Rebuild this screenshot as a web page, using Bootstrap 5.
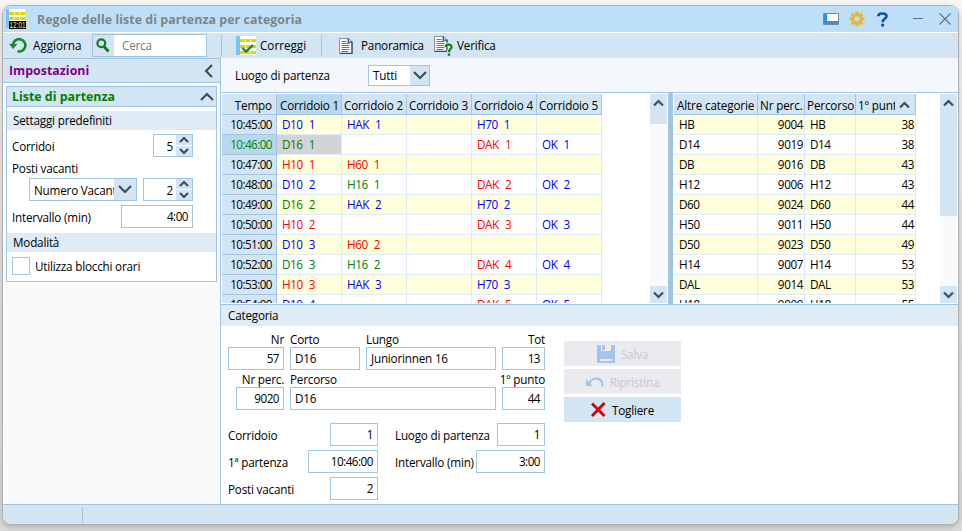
<!DOCTYPE html>
<html lang="it">
<head>
<meta charset="utf-8">
<title>Regole delle liste di partenza per categoria</title>
<link href="https://cdn.jsdelivr.net/npm/bootstrap@5.3.0/dist/css/bootstrap.min.css" rel="stylesheet">
<style>
:root{--line:#a0c5e3;--bar:#d3e5f3;--band:#dfebf5}
*{border-radius:0}
body{width:962px;height:531px;overflow:hidden;background:linear-gradient(#f6f6f6,#e4e4e4 50%,#dadada);font:11.7px/16px "Open Sans","Noto Sans",sans-serif;letter-spacing:-.2px;color:#000;padding:5px 0 0 2px}
.window{width:957px;height:520px;border:1px solid #b0b0b0;border-radius:9px;overflow:hidden;background:#fff;box-shadow:0 2px 6px #0003}
.titlebar{height:27px;background:#bde0f8;border-bottom:1px solid #fff;color:#838383;font-weight:700;font-size:12.4px;padding-left:3px;letter-spacing:.05px}
.titlebar .caption{margin-left:11px;margin-top:1px}
.toolbar{height:25px;background:var(--bar)}
.toolbar>span,.search>span{padding-bottom:2px}
.toolbar svg,.titlebar svg{flex:none;display:block}
.search{width:115px;height:23px;border:1px solid var(--line);background:#fff;margin-left:12px;color:#777;flex:none}
.search .lens{width:21px;height:21px;background:var(--bar);padding:3px}
.vline{width:1px;height:21px;background:var(--line)}
.side{width:218px;background:#f9fafc;border-right:1px solid var(--line)}
.side-head{height:25px;background:var(--bar);border:solid var(--line);border-width:1px 0;color:#800080;font-weight:700;font-size:12.4px;padding:0 7px 0 6px;letter-spacing:0}
.group{margin:3px 3px 0;width:211px;height:196px;border:1px solid var(--line);background:#fff}
.group-head{height:20px;background:var(--bar);border-bottom:1px solid var(--line);color:#008000;font-weight:700;font-size:12.4px;padding:0 2px 0 5px;letter-spacing:0}
.band{background:var(--band);height:19px;padding-left:6px;line-height:19px}
.field{height:23px;border:1px solid var(--line);background:#fff;flex:none;line-height:21px;padding:0 4px;white-space:nowrap;overflow:hidden}
.field.num{text-align:right;letter-spacing:-.5px}
.combo{border:1px solid var(--line);background:#fff;height:23px;flex:none;overflow:hidden}
.combo .val{flex:1;min-width:0;overflow:hidden;white-space:nowrap;padding-left:4px}
.drop{background:var(--bar);flex:none;align-self:stretch}
.spin{width:16px;align-self:stretch;background:#fff}
.spin span{background:var(--bar);height:10px}
.check{width:18px;height:18px;border:1px solid var(--line);background:#fff}
.main-top{height:35px;background:#f4f7fb;border-bottom:1px solid var(--line);padding:7px 0 0 14px}
.tables{height:212px;padding-top:1px;overflow:hidden;border-bottom:1px solid var(--line)}
.pane{overflow:hidden;height:209px;flex:none}
.grid{table-layout:fixed;border-collapse:separate;border-spacing:0}
.grid th{height:21px;background:var(--bar);border:solid var(--line);border-width:0 1px 1px 0;font-weight:400;padding:2px 0 0 2px;white-space:nowrap;overflow:hidden;line-height:16px;letter-spacing:-.15px}
.grid th.on,.grid th:first-child{padding-left:3px}
.grid td{height:20px;border:solid #deebfa;border-width:0 1px 1px 0;padding:0 1px 1px 5px;line-height:16px;white-space:pre;overflow:hidden;letter-spacing:-.4px;word-spacing:.4px}
.grid tr:nth-child(odd) td{background:#ffffdc}
.grid tr td.time,.grid th.time{text-align:right;padding-right:4px;padding-left:0}
.grid tr td.time{background:var(--bar);border-color:var(--line);letter-spacing:-.55px}
.grid tr td.time.on,.grid th.on{background:#bad8ec}
.grid tr td.cell-on{background:#d3d3da}
.grid .b{color:#00f}.grid .r{color:#f00}.grid .g{color:#008000}
.scroll{width:17px;height:209px;background:#f9fafc;flex:none}
.scroll div{background:var(--bar)}
.split{width:5px;height:212px;margin-top:-1px;background:var(--line);flex:none}
.detail-head{height:21px;line-height:21px}
.detail{padding-left:7px}
.cap{height:16px;line-height:16px}
.act{width:117px;height:25px;background:var(--bar)}
.act.off{background:#eaeaef;color:#c9c9cd}
.status{height:20px;background:var(--bar);border-top:1px solid var(--line);padding:2px 0 0 79px}
.w39{width:40px}.w43{width:43px}.w48{width:48px}.w50{width:50px}.w56{width:56px}.w62{width:62px}.w69{width:69px}.w70{width:70px}.w72{width:72px}.w108{width:108px}.w130{width:130px}.w206{width:206px}
.chev{fill:none;stroke:#3b5060;stroke-width:2.2}
</style>
<script src="https://cdn.jsdelivr.net/npm/bootstrap@5.3.0/dist/js/bootstrap.bundle.min.js"></script>
</head>
<body>
<div class="window d-flex flex-column">
  <div class="titlebar d-flex align-items-center">
    <svg width="20" height="20" viewBox="0 0 20 20"><path fill="#7cc3f4" d="M0 0h3v19H0z"/><path fill="#fff" d="M3 0h16v12H3z"/><path fill="#dbd900" d="M3 3h16v3H3zM3 8h16v3H3z"/><path stroke="#fff" d="M8.500 0v12M13.500 0v12" opacity=".7"/><path fill="#000" d="M3 12h17v8H3z"/><text x="3.500" y="19" font-size="8.500" font-family="Liberation Sans" font-weight="400" textLength="16" lengthAdjust="spacingAndGlyphs" fill="#f7ed62">12:01</text></svg>
    <span class="caption">Regole delle liste di partenza per categoria</span>
    <svg class="ms-auto" width="16" height="12" viewBox="0 0 16 12"><path fill="#fff" stroke="#7d8794" d="M.5.500h15v11H.5z"/><path fill="#338fe0" d="M1 1h3v10H1zM4 8h11v3H4z"/></svg>
    <svg style="margin-left:10px" width="16" height="16" viewBox="-8 -8 16 16"><g fill="#e7b73b"><path d="M-1.700-7.500h3.400v15h-3.400z"/><path d="M-1.700-7.500h3.400v15h-3.400z" transform="rotate(45)"/><path d="M-1.700-7.500h3.400v15h-3.400z" transform="rotate(90)"/><path d="M-1.700-7.500h3.400v15h-3.400z" transform="rotate(135)"/><circle r="5.500"/></g><circle r="2.600" fill="#bde0f8"/></svg>
    <svg style="margin-left:12px" width="11" height="15" viewBox="0 0 11 15"><path fill="none" stroke="#0c4fa0" stroke-width="2.600" d="M1.300 4.200C1.300 .5 9.500.5 9.500 4.200C9.500 6.800 5.600 6.700 5.600 10.200"/><path fill="#0c4fa0" d="M4.200 11.700h2.900v2.800H4.200z"/></svg>
    <svg style="margin-left:25px" width="11" height="12"><path stroke="#5c7184" d="M0 5.500h10"/></svg>
    <svg style="margin:0 7px 0 15px" width="12" height="12"><path stroke="#5c7184" stroke-width="1.100" d="M.5.500l11 11M11.500.500l-11 11"/></svg>
  </div>
  <div class="toolbar d-flex align-items-center">
    <svg style="margin-left:6px" width="19" height="17" viewBox="0 0 19 17"><path fill="none" stroke="#168a28" stroke-width="2.600" d="M4 8A6.200 6.200 0 1 1 8.500 14.300"/><path fill="#168a28" d="M0 6.800h8.400L4.100 12z"/></svg>
    <span style="margin-left:5px;width:48px;letter-spacing:0">Aggiorna</span>
    <div class="search d-flex align-items-center" style="margin-left:11px"><div class="lens"><svg width="14" height="15" viewBox="0 0 14 15"><circle cx="5.300" cy="5.300" r="3.900" fill="none" stroke="#187a1e" stroke-width="2.200"/><path stroke="#187a1e" stroke-width="3" d="M8 8.500l4.500 5"/></svg></div><span class="ms-2">Cerca</span></div>
    <span class="vline p-0" style="margin-left:14px"></span>
    <svg style="margin-left:14px" width="21" height="19" viewBox="0 0 21 19"><path fill="#7cc3f4" d="M0 0h4v19H0z"/><path fill="#fff" d="M4 0h16v19H4z"/><path fill="#dbd900" d="M4 3h16v3H4zM4 9h16v3H4zM4 15h16v3H4z"/><path stroke="#fff" d="M9.500 0v19M14.500 0v19" opacity=".7"/><path fill="none" stroke="#168a28" stroke-width="2.300" d="M6.500 12l3.500 3.700L17 9"/></svg>
    <span style="margin-left:3px;width:48px;letter-spacing:0">Correggi</span>
    <span class="vline p-0" style="margin-left:13px"></span>
    <svg style="margin-left:17px" width="14" height="16" viewBox="0 0 14 16"><path fill="#fff" stroke="#8193ab" d="M.5.500h9l3.500 3.500v11.500H.5z"/><path fill="none" stroke="#34486a" stroke-width="1.300" d="M9.300.500v3.600h3.700v11.300H1"/><path stroke="#4478d4" d="M2.500 3.500h5M2.500 5.500h8M2.500 7.500h8M2.500 9.500h8M2.500 11.500h8M2.500 13.500h7"/></svg>
    <span style="margin-left:8px;width:64px">Panoramica</span>
    <svg style="margin-left:9px" width="20" height="20" viewBox="0 0 20 20"><path fill="#fff" stroke="#8193ab" d="M.5.500h9l3.500 3.500v11.500H.5z"/><path fill="none" stroke="#34486a" stroke-width="1.300" d="M9.300.500v3.600h3.700v11.300H1"/><path stroke="#4478d4" d="M2.500 3.500h5M2.500 5.500h8M2.500 7.500h8M2.500 9.500h8M2.500 11.500h8M2.500 13.500h7"/><path fill="none" stroke="#d3e5f3" stroke-width="4" d="M11.500 10.500C12 7.500 18 8 17.600 11C17.400 13 15 13 15 16"/><path fill="none" stroke="#0b7d14" stroke-width="2.200" d="M11.700 11C12 7.600 17.800 8 17.600 11C17.400 13 15 13 15 16.200"/><path fill="#0b7d14" d="M13.800 17.400h2.400v2.400h-2.400z"/></svg>
    <span style="margin-left:3px">Verifica</span>
  </div>
  <div class="d-flex flex-grow-1" style="height:445px">
    <div class="side flex-shrink-0">
      <div class="side-head d-flex align-items-center justify-content-between"><span>Impostazioni</span><svg width="9" height="14"><path class="chev" d="M8 1L2 7l6 6"/></svg></div>
      <div class="group">
        <div class="group-head d-flex align-items-center justify-content-between"><span>Liste di partenza</span><svg width="14" height="9"><path class="chev" d="M1 8l6-6 6 6"/></svg></div>
        <div class="band mt-1">Settaggi predefiniti</div>
        <div class="d-flex align-items-center" style="margin:4px 23px 0 5px">
          <span>Corridoi</span>
          <div class="combo w39 d-flex align-items-center ms-auto"><span class="val text-end" style="padding-right:3px">5</span><div class="spin d-flex flex-column justify-content-between"><span class="d-flex align-items-center justify-content-center"><svg width="10" height="6"><path class="chev" d="M1 5l4-4 4 4"/></svg></span><span class="d-flex align-items-center justify-content-center"><svg width="10" height="6"><path class="chev" d="M1 1l4 4 4-4"/></svg></span></div></div>
        </div>
        <div style="margin:3px 0 0 5px;height:18px">Posti vacanti</div>
        <div class="d-flex" style="margin-left:22px">
          <div class="combo w108 d-flex align-items-center"><span class="val">Numero Vacanti</span><div class="drop d-flex align-items-center justify-content-center" style="width:22px"><svg width="14" height="9"><path class="chev" d="M1 1l6 6 6-6"/></svg></div></div>
          <div class="combo w50 d-flex align-items-center" style="margin-left:6px"><span class="val text-end" style="padding-right:3px">2</span><div class="spin d-flex flex-column justify-content-between"><span class="d-flex align-items-center justify-content-center"><svg width="10" height="6"><path class="chev" d="M1 5l4-4 4 4"/></svg></span><span class="d-flex align-items-center justify-content-center"><svg width="10" height="6"><path class="chev" d="M1 1l4 4 4-4"/></svg></span></div></div>
        </div>
        <div class="d-flex align-items-center justify-content-between" style="margin:4px 23px 0 5px"><span>Intervallo (min)</span><div class="field num w72">4:00</div></div>
        <div class="band" style="margin-top:5px">Modalità</div>
        <div class="d-flex align-items-center" style="margin:5px 0 0 5px"><span class="check"></span><span style="margin-left:5px">Utilizza blocchi orari</span></div>
      </div>
    </div>
    <div class="flex-grow-1">
      <div class="main-top d-flex align-items-start">
        <span style="margin-top:2px;width:133px">Luogo di partenza</span>
        <div class="combo w62 d-flex align-items-center" style="height:21px"><span class="val" style="padding-bottom:1px">Tutti</span><div class="drop d-flex align-items-center justify-content-center" style="width:19px"><svg width="14" height="9"><path class="chev" d="M1 1l6 6 6-6"/></svg></div></div>
      </div>
      <div class="tables d-flex">
        <div class="pane" style="width:429px;padding-left:1px">
          <table class="grid" style="width:380px">
            <colgroup><col style="width:55px"><col style="width:65px"><col style="width:65px"><col style="width:65px"><col style="width:65px"><col style="width:65px"></colgroup>
            <thead><tr><th class="time">Tempo</th><th class="on">Corridoio 1</th><th>Corridoio 2</th><th>Corridoio 3</th><th>Corridoio 4</th><th>Corridoio 5</th></tr></thead>
            <tbody id="starts"></tbody>
          </table>
        </div>
        <div class="scroll"><div class="d-flex justify-content-center" style="height:30px;padding-top:5px"><svg width="11" height="8"><path class="chev" d="M1 6.500l4.500-4.500 4.500 4.500"/></svg></div><div class="d-flex align-items-center justify-content-center" style="height:17px;margin-top:162px"><svg width="11" height="8"><path class="chev" d="M1 1.500l4.500 4.500 4.500-4.500"/></svg></div></div>
        <div style="width:1px"></div>
        <div class="split"></div>
        <div class="pane" style="width:267px;padding-left:1px">
          <table class="grid" style="width:242px">
            <colgroup><col style="width:84px"><col style="width:47px"><col style="width:51px"><col style="width:60px"></colgroup>
            <thead><tr><th>Altre categorie</th><th>Nr perc.</th><th>Percorso</th><th><div class="d-flex"><span class="overflow-hidden" style="width:37px">1º punto</span><svg class="ms-1 mt-1" width="11" height="8"><path class="chev" d="M1 6.500l4.500-4.500 4.500 4.500"/></svg></div></th></tr></thead>
            <tbody id="others"></tbody>
          </table>
        </div>
        <div class="scroll"><div class="d-flex justify-content-center" style="height:122px;padding-top:5px"><svg width="11" height="8"><path class="chev" d="M1 6.500l4.500-4.500 4.500 4.500"/></svg></div><div class="d-flex align-items-center justify-content-center" style="height:17px;margin-top:70px"><svg width="11" height="8"><path class="chev" d="M1 1.500l4.500 4.500 4.500-4.500"/></svg></div></div>
      </div>
      <div class="band detail-head" style="padding-left:7px">Categoria</div>
      <div class="detail d-flex">
        <div style="width:317px;padding-top:5px">
          <div class="d-flex cap"><span class="w56 text-end">Nr</span><span style="width:76px;margin-left:6px">Corto</span><span>Lungo</span><span class="ms-auto">Tot</span></div>
          <div class="d-flex justify-content-between"><div class="field num w56">57</div><div class="field w70">D16</div><div class="field w130">Juniorinnen 16</div><div class="field num w43">13</div></div>
          <div class="d-flex cap" style="margin-top:1px"><span class="w56 text-end">Nr perc.</span><span style="margin-left:6px">Percorso</span><span class="ms-auto">1º punto</span></div>
          <div class="d-flex" style="padding-left:8px"><div class="field num w48">9020</div><div class="field w206" style="margin:0 6px">D16</div><div class="field num w43">44</div></div>
          <div class="d-flex align-items-center" style="margin-top:13px"><span>Corridoio</span><div class="ms-auto field num w48">1</div><span style="width:102px;margin-left:17px">Luogo di partenza</span><div class="field num w48">1</div></div>
          <div class="d-flex align-items-center" style="margin-top:4px"><span>1ª partenza</span><div class="ms-auto field num w70">10:46:00</div><span class="text-nowrap" style="width:81px;margin-left:17px">Intervallo (min)</span><div class="field num w69">3:00</div></div>
          <div class="d-flex align-items-center" style="margin-top:4px;width:150px"><span>Posti vacanti</span><div class="ms-auto field num w48">2</div></div>
        </div>
        <div class="d-flex flex-column" style="margin:15px 0 0 19px;gap:3px">
          <div class="act off d-flex align-items-center justify-content-center"><svg width="18" height="18" viewBox="0 0 18 18"><path fill="#a3c4e8" d="M0 0h18v18H0z"/><path fill="#eaeaef" d="M4 0h10v6H4zM3 14h12v2H3z"/><path fill="#a3c4e8" d="M5 0h3v5H5z"/></svg><span style="margin-left:6px">Salva</span></div>
          <div class="act off d-flex align-items-center justify-content-center"><svg width="18" height="12" viewBox="0 0 18 12"><path fill="none" stroke="#a3c4e8" stroke-width="2.200" d="M3.500 7C6 .5 17 .5 16.500 10.500"/><path fill="#a3c4e8" d="M0 3l6.500 7H0z"/></svg><span style="margin-left:6px">Ripristina</span></div>
          <div class="act d-flex align-items-center justify-content-center"><svg width="15" height="15"><path stroke="#d40000" stroke-width="2.800" d="M1 1.500l12.500 12.500M13.500 1l-12.500 13"/></svg><span style="margin-left:6px">Togliere</span></div>
        </div>
      </div>
    </div>
  </div>
  <div class="status"><div class="vline" style="height:16px"></div></div>
</div>
<script>
// Start list rows: time, then one "colour|text" entry per corridor
const starts = [
  ['10:45:00','b|D10  1','b|HAK  1','','b|H70  1',''],
  ['10:46:00','g|D16  1','','','r|DAK  1','b|OK  1'],
  ['10:47:00','r|H10  1','r|H60  1','','',''],
  ['10:48:00','b|D10  2','g|H16  1','','r|DAK  2','b|OK  2'],
  ['10:49:00','g|D16  2','b|HAK  2','','b|H70  2',''],
  ['10:50:00','r|H10  2','','','r|DAK  3','b|OK  3'],
  ['10:51:00','b|D10  3','r|H60  2','','',''],
  ['10:52:00','g|D16  3','g|H16  2','','r|DAK  4','b|OK  4'],
  ['10:53:00','r|H10  3','b|HAK  3','','b|H70  3',''],
  ['10:54:00','b|D10  4','','','r|DAK  5','b|OK  5']
];
document.getElementById('starts').innerHTML = starts.map((row, i) => '<tr>' + row.map((v, c) => {
  if (c === 0) return `<td class="time${i === 1 ? ' on g' : ''}">${v}</td>`;
  const [color, text] = v ? v.split('|') : ['', ''];
  return `<td class="${color}${i === 1 && c === 1 ? ' cell-on' : ''}">${text}</td>`;
}).join('') + '</tr>').join('');
// Remaining categories: name, course number, first control
const others = [['HB',9004,38],['D14',9019,38],['DB',9016,43],['H12',9006,43],['D60',9024,44],['H50',9011,44],['D50',9023,49],['H14',9007,53],['DAL',9014,53],['H18',9009,55]];
document.getElementById('others').innerHTML = others.map(([n, p, f]) =>
  `<tr><td>${n}</td><td class="text-end">${p}</td><td>${n}</td><td class="text-end">${f}</td></tr>`).join('');
</script>
</body>
</html>
